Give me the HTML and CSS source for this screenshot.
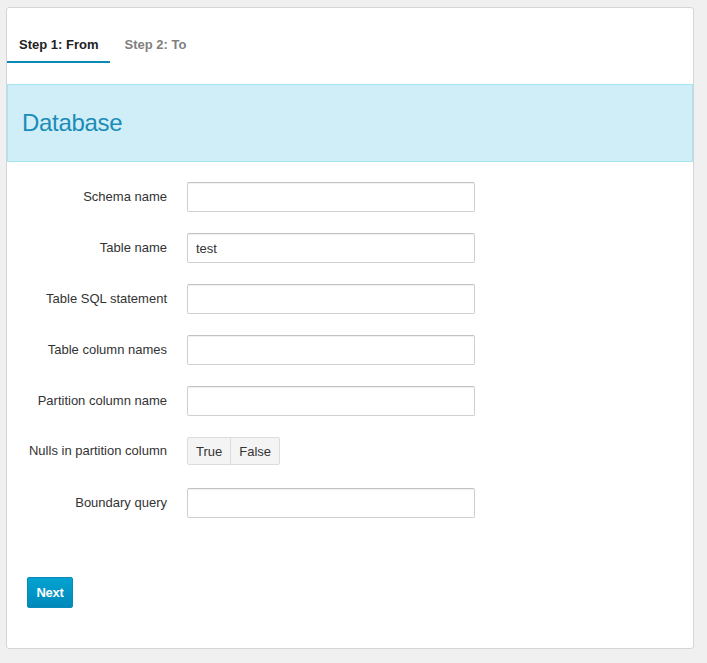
FILE: index.html
```html
<!DOCTYPE html>
<html>
<head>
<meta charset="utf-8">
<link rel="stylesheet" href="styles.css">
</head>
<body>
<div class="card">
  <div class="tabs">
    <div class="tab active">Step 1: From</div>
    <div class="tab">Step 2: To</div>
  </div>
  <div class="alert"><h2 class="alert-title">Database</h2></div>
  <form class="form">
    <label class="label">Schema name</label>
    <input class="input" type="text" value="">
    <label class="label">Table name</label>
    <input class="input" type="text" value="test">
    <label class="label">Table SQL statement</label>
    <input class="input" type="text" value="">
    <label class="label">Table column names</label>
    <input class="input" type="text" value="">
    <label class="label">Partition column name</label>
    <input class="input" type="text" value="">
    <label class="label label-top">Nulls in partition column</label>
    <div class="btn-group">
      <span class="seg">True</span><span class="seg">False</span>
    </div>
    <label class="label">Boundary query</label>
    <input class="input" type="text" value="">
  </form>
  <div class="actions">
    <button class="btn-next" type="button">Next</button>
  </div>
</div>
</body>
</html>
```
FILE: styles.css
```css
* { box-sizing: border-box; }
html, body {
  margin: 0;
  padding: 0;
  background: #f0f0f0;
  font-family: "Liberation Sans", Arial, sans-serif;
  font-size: 13px;
  color: #333;
}
.card {
  margin: 7px 0 0 6px;
  width: 688px;
  height: 642px;
  background: #fff;
  border: 1px solid #d5d5d5;
  border-radius: 3px;
}
.tabs {
  display: flex;
  padding-top: 19px;
  margin-bottom: 21px;
}
.tab {
  padding: 8px 12px 6px;
  line-height: 20px;
  font-weight: bold;
  color: #808080;
  border-bottom: 2px solid transparent;
  margin-right: 2px;
}
.tab.active {
  color: #222;
  border-bottom-color: #0a8ab3;
}
.alert {
  background: #d0eef8;
  border: 1px solid #a6e6f2;
  padding: 24px 14px;
}
.alert-title {
  margin: 0;
  font-size: 24px;
  font-weight: normal;
  line-height: 28px;
  color: #1a8cb8;
  letter-spacing: -0.3px;
}
.form {
  display: grid;
  grid-template-columns: 160px 288px;
  column-gap: 20px;
  row-gap: 21px;
  align-items: center;
  margin-top: 20px;
}
.label {
  text-align: right;
  color: #333;
  line-height: 16px;
}
.label-top {
  align-self: start;
  padding-top: 6px;
}
.input {
  height: 30px;
  width: 288px;
  margin: 0;
  border: 1px solid #cfcfcf;
  border-top-color: #c2c2c2;
  border-radius: 2px;
  box-shadow: inset 0 1px 1px rgba(0,0,0,0.06);
  padding: 0 8px;
  font-family: "Liberation Sans", Arial, sans-serif;
  font-size: 13px;
  color: #333;
  background: #fff;
}
.btn-group {
  display: flex;
  height: 28px;
  margin-bottom: 2px;
  justify-self: start;
}
.seg {
  display: flex;
  align-items: center;
  padding: 0 8px;
  background: #f4f4f4;
  border: 1px solid #dcdcdc;
  color: #333;
}
.seg:first-child {
  border-radius: 2px 0 0 2px;
}
.seg + .seg {
  margin-left: -1px;
  border-radius: 0 2px 2px 0;
}
.actions {
  padding: 59px 0 0 20px;
}
.btn-next {
  height: 31px;
  width: 46px;
  padding: 0;
  border: 1px solid #0a8ab8;
  border-radius: 2px;
  background: linear-gradient(#03a2d1, #0089ba);
  color: #fff;
  font-family: "Liberation Sans", Arial, sans-serif;
  font-size: 13px;
  font-weight: bold;
  letter-spacing: -0.3px;
}
```
